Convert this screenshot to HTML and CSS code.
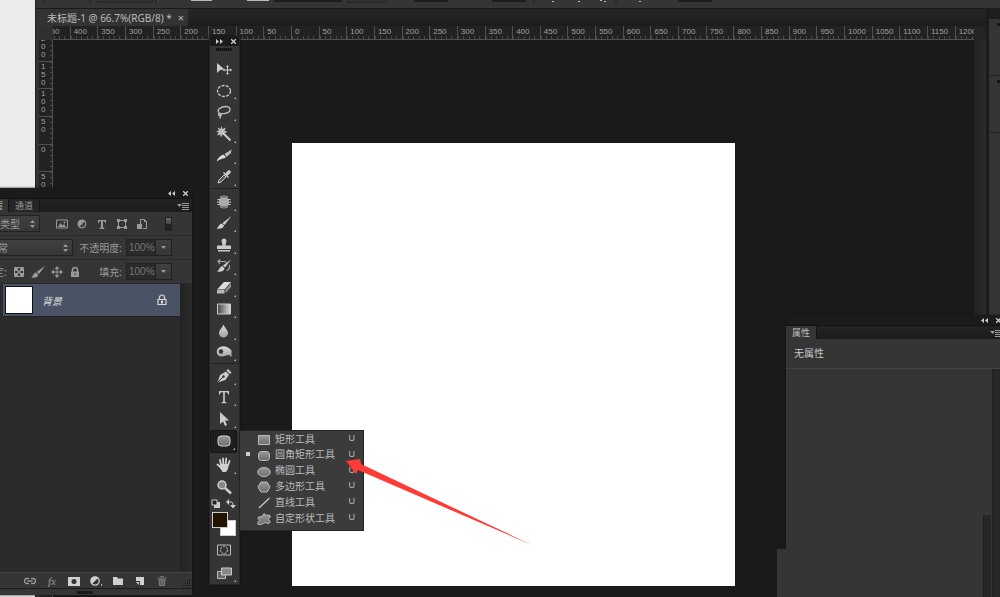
FILE: index.html
```html
<!DOCTYPE html>
<html lang="zh-CN">
<head>
    <meta charset="UTF-8">
    <meta name="viewport" content="width=device-width, initial-scale=1.0">
    <title>未标题-1</title>
    <link rel="stylesheet" href="styles.css">
</head>
<body>
    <svg class="defs" width="0" height="0" aria-hidden="true">
        <linearGradient id="metal" x1="0" y1="0" x2="0" y2="1">
            <stop offset="0" stop-color="#d8d8d8"/>
            <stop offset="1" stop-color="#a4a4a4"/>
        </linearGradient>
        <linearGradient id="shape" x1="0" y1="0" x2="0" y2="1">
            <stop offset="0" stop-color="#999"/>
            <stop offset="1" stop-color="#6c6c6c"/>
        </linearGradient>
        <linearGradient id="fade" x1="0" y1="0" x2="1" y2="0">
            <stop offset="0" stop-color="#444"/>
            <stop offset="1" stop-color="#ddd"/>
        </linearGradient>
    </svg>

    <div class="screen">
        <div class="desktop"></div>
        <div class="app">
            <!-- オプションバー -->
            <div class="options-bar">
                <svg width="965" height="6" viewBox="35 0 965 6">
                    <path d="M43 0v2M89 0v4M155 0v4M533 0v4M615 0v4" stroke="#222"/>
                    <path d="M95.500 0v2h56v-2M346.500 0v2h40v-2" fill="none" stroke="#202020"/>
                    <path d="M190 0h21v1h-21zM246 0h22v1h-22z" fill="#b8b8b8"/>
                    <path d="M273 0h68v2h-68zM413 0h34v2h-34zM491 0h34v2h-34zM677 0h34v2h-34z" fill="#1d1d1d"/>
                    <path d="M551 1h2v1h-2zM577 1h2v1h-2zM599 0h2v1h-2zM603 1h2v1h-2zM638 1h2v1h-2z" fill="#bbb"/>
                </svg>
            </div>
            <div class="workspace">
                <div class="document">
                    <div class="doc-tabs">
                        <div class="doc-tab">
                            <span>未标题-1 @ 66.7%(RGB/8) *</span>
                            <button class="close" aria-label="关闭">×</button>
                        </div>
                    </div>
                    <div class="ruler-row">
                        <div class="ruler-corner"></div>
                        <div class="ruler-h">
                            <span>450</span><span>400</span><span>350</span><span>300</span><span>250</span>
                            <span>200</span><span>150</span><span>100</span><span>50</span><span>0</span>
                            <span>50</span><span>100</span><span>150</span><span>200</span><span>250</span>
                            <span>300</span><span>350</span><span>400</span><span>450</span><span>500</span>
                            <span>550</span><span>600</span><span>650</span><span>700</span><span>750</span>
                            <span>800</span><span>850</span><span>900</span><span>950</span><span>1000</span>
                            <span>1050</span><span>1100</span><span>1150</span><span>1200</span>
                        </div>
                        <div class="scroll-top"></div>
                    </div>
                    <div class="view">
                        <div class="ruler-v">
                            <span>200</span><span>150</span><span>100</span><span>50</span><span>0</span><span>50</span>
                        </div>
                        <div class="canvas">
                            <div class="artboard"></div>
                        </div>
                        <div class="scrollbar"></div>
                    </div>
                </div>
                <div class="dock">
                    <div class="dock-head"></div>
                    <div class="dock-group"></div>
                    <div class="dock-group"></div>
                    <div class="dock-rest"></div>
                </div>
            </div>
        </div>

        <!-- レイヤーパネル -->
        <section class="panel layers">
            <header class="panel-head">
                <button aria-label="折叠"><svg width="7" height="5" viewBox="0 0 7 5"><path d="M3 0v5L0 2.500zM7 0v5L4 2.500z"/></svg></button>
                <button aria-label="关闭面板"><svg width="5" height="5" viewBox="0 0 5 5"><path d="M0 0l5 5M5 0L0 5" stroke="#ccc" stroke-width="1.300"/></svg></button>
            </header>
            <div class="panel-tabs">
                <button class="tab active">图层</button>
                <button class="tab">通道</button>
                <button class="menu-btn" aria-label="面板菜单"><svg width="12" height="8" viewBox="0 0 12 8"><path d="M0 2h5L2.500 5z"/><path d="M5 1.500h7M5 3.500h7M5 5.500h7M5 7.500h7" stroke="#999"/></svg></button>
            </div>
            <div class="row filter-row">
                <span class="select-box kind">
                    <select aria-label="类型"><option>类型</option></select>
                    <svg width="5" height="8" viewBox="0 0 5 8"><path d="M0 3L2.500 0 5 3zM0 5h5L2.500 8z"/></svg>
                </span>
                <div class="filters">
                    <button aria-label="像素图层"><svg viewBox="0 0 12 12"><path d="M.5 2h11v8H.5z" fill="none" stroke="#999"/><path d="M2 9l2.500-4 2 2.500L8 6l2 3z"/><circle cx="8.500" cy="4.500" r="1"/></svg></button>
                    <button aria-label="调整图层"><svg viewBox="0 0 12 12"><circle cx="6" cy="6" r="4" fill="#444" stroke="#999"/><path d="M3 9a4.200 4.200 0 0 1 6-6z"/></svg></button>
                    <button aria-label="文字图层"><svg viewBox="0 0 12 12"><path d="M2 2h8v3H9L8.500 3.300H7v6l1.300.7v1H3.700v-1L5 9.300v-6H3.500L3 5H2z"/></svg></button>
                    <button aria-label="形状图层"><svg viewBox="0 0 12 12"><path d="M2.500 2.500h7v7h-7z" fill="none" stroke="#999"/><path d="M1 1h3v3H1zM8 1h3v3H8zM1 8h3v3H1zM8 8h3v3H8z"/></svg></button>
                    <button aria-label="智能对象"><svg viewBox="0 0 12 12"><path d="M4.500 6V1.500h4l2 2v7H7" fill="none" stroke="#999"/><path d="M1 6h5v5H1zM8 1l3 3H8z"/></svg></button>
                </div>
                <button class="toggle" aria-label="打开或关闭图层过滤"></button>
            </div>
            <div class="row">
                <span class="select-box blend">
                    <select aria-label="混合模式"><option>正常</option></select>
                    <svg width="5" height="8" viewBox="0 0 5 8"><path d="M0 3L2.500 0 5 3zM0 5h5L2.500 8z"/></svg>
                </span>
                <label class="amount">不透明度: <input type="text" value="100%"></label>
                <button class="drop" aria-label="不透明度滑块"><svg width="5" height="3" viewBox="0 0 5 3"><path d="M0 0h5L2.500 3z"/></svg></button>
            </div>
            <div class="row">
                <span class="lock-label">锁定:</span>
                <div class="locks">
                    <button aria-label="锁定透明像素"><svg viewBox="0 0 12 12"><path d="M1.500 1.500h9v9h-9z" fill="#333" stroke="#999"/><path d="M2 2h3v3H2zM7 2h3v3H7zM4.500 4.500h3v3h-3zM2 7h3v3H2zM7 7h3v3H7z"/></svg></button>
                    <button class="brush" aria-label="锁定图像像素"><svg viewBox="0 0 14 12"><path d="M14 0L8 8 5.500 6zM5 6.500L7.500 9C6.500 12 3 12 0 11.500 2.500 10.500 2 7 5 6.500z"/></svg></button>
                    <button aria-label="锁定位置"><svg viewBox="0 0 12 12"><path d="M6 0l2.500 3h-5zM6 12L3.500 9h5zM0 6l3-2.500v5zM12 6L9 8.500v-5z"/><path d="M6 2v8M2 6h8" stroke="#999"/></svg></button>
                    <button aria-label="锁定全部"><svg viewBox="0 0 12 12"><path d="M3.500 6V4a2.500 2.500 0 0 1 5 0v2" fill="none" stroke="#999" stroke-width="1.500"/><path d="M2 5.500h8V11H2z"/><path d="M5.500 7h1v2h-1z" fill="#333"/></svg></button>
                </div>
                <label class="amount">填充: <input type="text" value="100%"></label>
                <button class="drop" aria-label="填充滑块"><svg width="5" height="3" viewBox="0 0 5 3"><path d="M0 0h5L2.500 3z"/></svg></button>
            </div>
            <div class="layer-area">
                <div class="layer-list">
                    <div class="layer">
                        <span class="thumb"></span>
                        <em class="layer-name">背景</em>
                        <svg width="10" height="12" viewBox="0 0 10 12"><path d="M2.500 5V3.500a2.500 2.500 0 0 1 5 0V5M1 5.500h8v5H1z" fill="none" stroke="#d5d5d5" stroke-width="1.200"/><path d="M4 6.500h2v3H4z" fill="#ddd"/></svg>
                    </div>
                </div>
                <div class="layer-scroll"></div>
            </div>
            <footer class="layer-foot">
                <button aria-label="链接图层"><svg viewBox="0 0 12 12"><path d="M5 8.500H3a2.500 2.500 0 0 1 0-5h2M7 3.500h2a2.500 2.500 0 0 1 0 5H7M3.500 6h5" fill="none" stroke="#999" stroke-width="1.300"/></svg></button>
                <button class="fx" aria-label="图层样式">fx</button>
                <button aria-label="添加蒙版"><svg viewBox="0 0 12 12"><path d="M0 2h12v9H0z" fill="#d0d0d0"/><circle cx="6" cy="6.500" r="2.500" fill="#333"/></svg></button>
                <button aria-label="调整图层"><svg viewBox="0 0 12 12"><circle cx="5" cy="6" r="4.200" fill="#333" stroke="#d0d0d0" stroke-width="1.200"/><path d="M2 9a4.200 4.200 0 0 1 6-6z" fill="#d0d0d0"/><path d="M11 9h1v2h-1z" fill="#aaa"/></svg></button>
                <button aria-label="新建组"><svg viewBox="0 0 12 12"><path d="M1 2h4l1 1.500h5V10H1z" fill="#d0d0d0"/></svg></button>
                <button aria-label="新建图层"><svg viewBox="0 0 12 12"><path d="M2 2h8v8H6V6H2z" fill="#d0d0d0"/><path d="M2 7h3v3z" fill="#d0d0d0"/></svg></button>
                <button aria-label="删除图层"><svg viewBox="0 0 12 12"><path d="M1.500 3h9M4.500 2.500v-1h3v1" stroke="#777" fill="none"/><path d="M2.500 4h7L9 11H3z" fill="#777"/><path d="M4.500 5v5M6 5v5M7.500 5v5" stroke="#444" stroke-width=".6"/></svg></button>
                <svg class="resize" viewBox="0 0 8 8"><path d="M6 0h1v1H6zM4 2h1v1H4zM6 2h1v1H6zM2 4h1v1H2zM4 4h1v1H4zM6 4h1v1H6zM0 6h1v1H0zM2 6h1v1H2zM4 6h1v1H4zM6 6h1v1H6z" fill="#151515"/></svg>
            </footer>
            <div class="grip-row"><span class="grip"></span></div>
        </section>

        <!-- ツールパネル -->
        <section class="toolbox">
            <header class="panel-head">
                <button aria-label="展开"><svg width="7" height="5" viewBox="0 0 7 5"><path d="M0 0v5l3-2.500zM4 0v5l3-2.500z"/></svg></button>
                <button aria-label="关闭工具"><svg width="5" height="5" viewBox="0 0 5 5"><path d="M0 0l5 5M5 0L0 5" stroke="#ccc" stroke-width="1.300"/></svg></button>
            </header>
            <div class="tool-grip"><span class="grip"></span></div>
            <div class="tools select-tools">
                <button aria-label="移动工具"><svg viewBox="0 0 16 16"><path d="M1 2v10l2.500-2.500L8 8z" fill="#ccc"/><path d="M11.500 5v8M7.500 9h8" stroke="#ccc"/><path d="M11.500 4l1.500 2h-3zM11.500 14l1.500-2h-3zM6.500 9l2-1.500v3zM16 9l-2 1.500v-3z" fill="#ccc"/></svg></button>
                <button class="more" aria-label="椭圆选框工具"><svg viewBox="0 0 16 16"><ellipse cx="8" cy="8" rx="6.500" ry="5.500" fill="none" stroke="#ccc" stroke-width="1.300" stroke-dasharray="3 1.200"/></svg></button>
                <button class="more" aria-label="套索工具"><svg viewBox="0 0 16 16"><path d="M4 10C-1 6 5 2.500 10 2.500c6 0 5 6-1 7-3 .5-5-.5-6 .5s0 2 1.500 1.500S5 10 3.500 10M4.500 12l-.5 2.500" fill="none" stroke="#bbb" stroke-width="1.400"/></svg></button>
                <button class="more" aria-label="魔棒工具"><svg viewBox="0 0 16 16"><path d="M5.500 0l1 3L10 1.500 8.500 4.500l3 1.500-3 1 1 3-3-1.500-1.500 3-1-3-3 1 1.500-3L0 5.500l3-1-1.500-3L4.500 3z" fill="#bbb"/><path d="M7 7l7.500 7.500" stroke="#ccc" stroke-width="2"/></svg></button>
                <button class="more" aria-label="切片工具"><svg viewBox="0 0 16 16"><path d="M.5 13.500c1-3 4-6 7-7L10 9.500c-3 1-6 1.500-9.500 4z" fill="#ddd"/><path d="M8.500 6L15.500 1.500 15 5l-4.500 4z" fill="#bbb"/></svg></button>
                <button class="more" aria-label="吸管工具"><svg viewBox="0 0 16 16"><path d="M2 14l1-3 5-5 2 2-5 5z" fill="#555" stroke="#ccc"/><path d="M7 4l5 5 1-1-1.500-1.500 3-2.500c1-2-1-3.500-2.500-2.500L9.500 4.500 8 3z" fill="#ccc"/></svg></button>
            </div>
            <div class="tools paint-tools">
                <button class="more" aria-label="修补工具"><svg viewBox="0 0 16 16"><path d="M5 2v12M7 1.500v13M9 1.500v13M11 2v12M1.500 5.500h13M1 8h14M1.500 10.500h13" stroke="#ccc"/><rect x="3" y="4" width="10" height="8" rx="3" fill="#aaa"/></svg></button>
                <button class="more" aria-label="画笔工具"><svg viewBox="0 0 16 16"><path d="M15.500 1L8.500 10 6.500 8zM6 8.500L8 10.500C7.500 14 3 14 .5 13.500c2-1 2.500-4.500 5.500-5z" fill="#d0d0d0"/></svg></button>
                <button class="more" aria-label="仿制图章工具"><svg viewBox="0 0 16 16"><path d="M8 1.500a2.500 2.500 0 0 1 2 4L9.500 8.500H14a1 1 0 0 1 1 1V12H1V9.500a1 1 0 0 1 1-1h4.500L6 5.500a2.500 2.500 0 0 1 2-4zM2 13h12v1.500H2z" fill="#ccc"/></svg></button>
                <button class="more" aria-label="历史记录画笔工具"><svg viewBox="0 0 16 16"><path d="M15 1.500L9 9.500 7 7.500zM6.500 8l2 2.500C8 14 4 14 1 13.500c2-1 2.500-5 5.500-5.500z" fill="#ccc"/><path d="M2 3.500h6c1 0 2 .5 2.500 1M4 1.500L2 3.500l2 2.500M13 7c1.500 2 0 5-2.500 5.500" fill="none" stroke="#aaa" stroke-width="1.200"/></svg></button>
                <button class="more" aria-label="橡皮擦工具"><svg viewBox="0 0 16 16"><path d="M8 2h7L9 9H1.500z" fill="#ddd"/><path d="M1 9.500h7.500V13.500H1z" fill="#b8b8b8"/><path d="M9.500 9.500L15 3v4l-5.500 6.500z" fill="#8c8c8c"/></svg></button>
                <button class="more" aria-label="渐变工具"><svg viewBox="0 0 16 16"><path d="M1.500 3h13v10h-13z" fill="url(#fade)" stroke="#ccc"/></svg></button>
                <button class="more" aria-label="模糊工具"><svg viewBox="0 0 16 16"><path d="M7.500 1.500C9 5 12 7 12 10a4.500 4.500 0 0 1-9 0c0-3 3-5 4.500-8.500z" fill="url(#metal)"/></svg></button>
                <button class="more" aria-label="加深工具"><svg viewBox="0 0 16 16"><path d="M4 3c4-2 9 0 11.500 3.500V13c-1 0-1-1.500-2.500-2-3 0-5 2-8 1.500C-.5 12-.5 5 4 3z" fill="url(#metal)"/><circle cx="5" cy="7.500" r="2.200" fill="#333"/></svg></button>
            </div>
            <div class="tools vector-tools">
                <button class="more" aria-label="钢笔工具"><svg viewBox="0 0 16 16"><path d="M1.500 14.500L4 7l6-3.500 3 3L9.500 12z" fill="#ccc"/><path d="M10.500 2.500L12 1l3.500 3.500L14 6z" fill="#ccc"/><path d="M2 14l5-5" stroke="#333"/><circle cx="7.500" cy="8.500" r="1.200" fill="#333"/></svg></button>
                <button class="more" aria-label="横排文字工具"><svg viewBox="0 0 16 16"><path d="M3 2h10v3.500h-1c0-1.500-.5-2.200-2-2.200H8.800v9c0 .7.500 1 1.700 1v1h-5v-1c1.200 0 1.700-.3 1.700-1v-9H6c-1.500 0-2 .7-2 2.200H3z" fill="#ccc"/></svg></button>
                <button class="more" aria-label="路径选择工具"><svg viewBox="0 0 16 16"><path d="M4 1v12l3-2.500L9 15l2-1-2-4.500h4z" fill="#ccc"/></svg></button>
                <button class="more current" aria-label="圆角矩形工具"><svg viewBox="0 0 16 16"><rect x="2" y="3" width="12" height="10" rx="3" fill="url(#shape)" stroke="#ccc"/></svg></button>
            </div>
            <div class="tools nav-tools">
                <button class="more" aria-label="抓手工具"><svg viewBox="0 0 16 16"><path d="M5 8L4 3M7.300 7L7 1.500M9.700 7l.5-5.500M12 8.500L13.500 4M5.500 11L1.500 7.500" stroke="#d0d0d0" stroke-width="1.800" stroke-linecap="round"/><path d="M4.500 7h8l-.5 5-2 3H6.500L3.500 10z" fill="#d0d0d0"/></svg></button>
                <button aria-label="缩放工具"><svg viewBox="0 0 16 16"><circle cx="6" cy="6" r="4" fill="#888" stroke="#ccc" stroke-width="1.500"/><path d="M9 9l6 5.500" stroke="#ccc" stroke-width="2.500"/></svg></button>
            </div>
            <div class="swap">
                <button aria-label="默认颜色"><svg viewBox="0 0 10 10"><path d="M3 3h6v6H3z" fill="#ccc"/><path d="M1 1h5v5H1z" fill="#222" stroke="#ccc"/></svg></button>
                <button aria-label="切换颜色"><svg viewBox="0 0 10 10"><path d="M2 3h3.500Q7 3 7 6" fill="none" stroke="#ccc"/><path d="M0 3l3-3v6zM4 6h6L7 9.500z" fill="#ccc"/></svg></button>
            </div>
            <div class="swatches">
                <button class="swatch back" aria-label="背景色"></button>
                <button class="swatch fore" aria-label="前景色"></button>
            </div>
            <div class="tools mode-tools">
                <button aria-label="快速蒙版"><svg viewBox="0 0 16 16"><path d="M1.500 3h13v10h-13z" fill="#333" stroke="#bbb"/><circle cx="8" cy="8" r="3.500" fill="none" stroke="#ccc" stroke-dasharray="2 1"/></svg></button>
                <button class="more" aria-label="屏幕模式"><svg viewBox="0 0 16 16"><path d="M1.500 6.500h8v7h-8z" fill="#666" stroke="#bbb"/><path d="M5.500 3h10v7h-10z" fill="#888" stroke="#ccc"/></svg></button>
            </div>
        </section>

        <!-- 図形ツールのメニュー -->
        <ul class="shape-menu">
            <li><button><i></i><svg viewBox="0 0 14 12"><path d="M1.500 1.500h11v9h-11z" fill="url(#shape)" stroke="#bbb"/></svg><span>矩形工具</span><kbd>U</kbd></button></li>
            <li><button><i class="on"></i><svg viewBox="0 0 14 12"><rect x="1.500" y="1.500" width="11" height="9" rx="3" fill="url(#shape)" stroke="#bbb"/></svg><span>圆角矩形工具</span><kbd>U</kbd></button></li>
            <li><button><i></i><svg viewBox="0 0 14 12"><ellipse cx="7" cy="6" rx="6.300" ry="4.500" fill="url(#shape)" stroke="#bbb"/></svg><span>椭圆工具</span><kbd>U</kbd></button></li>
            <li><button><i></i><svg viewBox="0 0 14 12"><path d="M4 1h6l3 5-3 5H4L1 6z" fill="url(#shape)" stroke="#bbb"/></svg><span>多边形工具</span><kbd>U</kbd></button></li>
            <li><button><i></i><svg viewBox="0 0 14 12"><path d="M2 11L12.500 1" stroke="#ccc" stroke-width="1.200"/></svg><span>直线工具</span><kbd>U</kbd></button></li>
            <li><button><i></i><svg viewBox="0 0 14 12"><path d="M6.500 1Q8 0 8.500 2.500L12 2q2 .5 1 2.500l-2 1.500 2 2.500q0 2-2 2L8 9.500 4 11.500 1 11.300Q0 10 1.500 8.500L3 7.500 1 5.500Q1 3.500 3 3.800L5 4z" fill="url(#shape)" stroke="#bbb"/></svg><span>自定形状工具</span><kbd>U</kbd></button></li>
        </ul>

        <!-- 属性パネル -->
        <section class="panel props">
            <header class="panel-head">
                <button aria-label="折叠属性"><svg width="7" height="5" viewBox="0 0 7 5"><path d="M3 0v5L0 2.500zM7 0v5L4 2.500z"/></svg></button>
                <button aria-label="关闭属性"><svg width="5" height="5" viewBox="0 0 5 5"><path d="M0 0l5 5M5 0L0 5" stroke="#ccc" stroke-width="1.300"/></svg></button>
            </header>
            <div class="panel-tabs">
                <button class="tab active">属性</button>
                <button class="menu-btn" aria-label="属性菜单"><svg width="12" height="8" viewBox="0 0 12 8"><path d="M0 2h5L2.500 5z"/><path d="M5 1.500h7M5 3.500h7M5 5.500h7M5 7.500h7" stroke="#999"/></svg></button>
            </div>
            <p class="props-title">无属性</p>
            <div class="props-body">
                <div class="props-main"></div>
                <div class="props-scroll"></div>
            </div>
        </section>
        <div class="props-drawer"></div>
        <div class="props-track"></div>

        <svg class="arrow" width="188" height="88" viewBox="0 0 188 88">
            <path d="M1 3L15 1l1 5 172 81.500L13 12l-2 4z" fill="#ff3b36"/>
        </svg>
    </div>
</body>
</html>
```
FILE: styles.css
```css
* {
    box-sizing: border-box;
    margin: 0;
    padding: 0;
}

body {
    font-family: "Noto Sans", "Noto Sans CJK SC", sans-serif;
    font-size: 10px;
    color: #bbb;
    background-color: #1a1a1a;
}

button,
input,
select {
    font: inherit;
    color: inherit;
    background: none;
    border: none;
    border-radius: 0;
}

button {
    display: flex;
    align-items: center;
    justify-content: center;
    cursor: pointer;
}

svg {
    display: block;
    fill: #999;
}

.defs {
    position: absolute;
}

.screen {
    position: relative;
    display: flex;
    height: 100vh;
    overflow: hidden;
}

.desktop {
    flex: 0 0 35px;
    background-color: #ebebeb;
}

.app {
    flex: 1;
    min-width: 0;
    display: flex;
    flex-direction: column;
    background-color: #1a1a1a;
    border-left: 1px solid #222;
}

/* オプションバー */
.options-bar {
    flex: 0 0 9px;
    overflow: hidden;
    background-color: #353535;
    border-bottom: 1px solid #1a1a1a;
}

.workspace {
    flex: 1;
    min-height: 0;
    display: flex;
    border-left: 3px solid #323232;
}

/* ドキュメント */
.document {
    flex: 1;
    min-width: 0;
    display: flex;
    flex-direction: column;
}

.doc-tabs {
    flex: 0 0 17px;
    display: flex;
    background: linear-gradient(#262626, #1c1c1c);
}

.doc-tab {
    display: flex;
    align-items: center;
    gap: 6px;
    padding: 0 4px 0 8px;
    background-color: #333;
    white-space: nowrap;
}

.close {
    font-size: 11px;
    line-height: 11px;
}

.ruler-row {
    flex: 0 0 14px;
    display: flex;
    font: 8px/11px "Liberation Sans", sans-serif;
    color: #a0a0a0;
}

.ruler-corner {
    flex: 0 0 14px;
    background-color: #303030;
}

.ruler-h {
    flex: 1;
    display: grid;
    grid-auto-flow: column;
    grid-auto-columns: calc(83px / 3);
    overflow: hidden;
    background-color: #222;
    border-bottom: 1px solid #505050;
}

.ruler-h span {
    margin-left: -11px;
    margin-right: 11px;
    padding-left: 3px;
    border-left: 1px solid #505050;
    background: repeating-linear-gradient(90deg, #484848 0 1px, transparent 1px 20%) bottom / 100% 3px no-repeat;
}

.scroll-top {
    flex: 0 0 12px;
    background-color: #242424;
}

.view {
    flex: 1;
    min-height: 0;
    display: flex;
}

.ruler-v {
    flex: 0 0 14px;
    display: grid;
    grid-auto-rows: calc(83px / 3);
    overflow: hidden;
    background-color: #222;
    border-right: 1px solid #505050;
    font: 8px/8px "Liberation Sans", sans-serif;
    color: #a0a0a0;
}

.ruler-v span {
    margin-top: -7px;
    margin-bottom: 7px;
    padding: 1px 8px 0 2px;
    word-break: break-all;
    border-top: 1px solid #505050;
    background: repeating-linear-gradient(#484848 0 1px, transparent 1px 20%) right / 3px 100% no-repeat;
}

.canvas {
    flex: 1;
    padding: 103px 0 10px 239px;
}

.artboard {
    width: 443px;
    aspect-ratio: 1;
    background-color: #fff;
}

.scrollbar {
    flex: 0 0 12px;
    background: linear-gradient(90deg, #222, #2b2b2b);
}

/* 右側のドック */
.dock {
    flex: 0 0 14px;
    display: flex;
    flex-direction: column;
    border-left: 3px solid #1c1c1c;
    background-color: #353535;
}

.dock-head {
    flex: 0 0 10px;
    background-color: #1e1e1e;
}

.dock-group {
    flex: 0 0 57px;
    padding: 4px 0 0 8px;
    border-bottom: 1px solid #202020;
}

.dock-group::before {
    content: "";
    display: block;
    height: 3px;
    background-color: #151515;
}

.dock-rest {
    flex: 1;
}

/* パネル共通 */
.panel,
.toolbox {
    position: absolute;
    display: flex;
    flex-direction: column;
    background-color: #353535;
    box-shadow: 0 0 2px #111;
}

.panel-head {
    flex: 0 0 10px;
    display: flex;
    align-items: center;
    justify-content: flex-end;
    gap: 8px;
    padding-right: 4px;
    background-color: #1b1b1b;
    border-radius: 2px 2px 0 0;
}

.panel-head svg {
    fill: #ccc;
}

.panel-tabs {
    flex: 0 0 14px;
    display: flex;
    background: linear-gradient(#232323, #1c1c1c);
    border-top: 1px solid #111;
}

.tab {
    padding: 0 6px;
    font-size: 9px;
    line-height: 13px;
    color: #999;
    background-color: #262626;
    border-right: 1px solid #141414;
}

.tab.active {
    color: #bbb;
    background-color: #353535;
}

.menu-btn {
    margin-left: auto;
    padding-right: 3px;
}

.grip {
    width: 16px;
    height: 3px;
    background: repeating-linear-gradient(90deg, #111 0 1px, #222 1px 2px);
}

/* レイヤーパネル */
.layers {
    left: -40px;
    top: 188px;
    bottom: 2px;
    width: 232px;
}

.layers .tab.active {
    padding: 0 5px 0 25px;
}

.row {
    flex: 0 0 24px;
    display: flex;
    align-items: center;
    padding-right: 20px;
    color: #999;
    border-bottom: 1px solid #292929;
}

.select-box {
    display: flex;
    align-items: center;
    height: 17px;
    background: linear-gradient(#404040, #363636);
    border: 1px solid #222;
}

.select-box select {
    flex: 1;
    appearance: none;
    outline: none;
}

.select-box svg {
    margin: 0 4px 0 -10px;
    pointer-events: none;
}

.kind {
    width: 80px;
    padding-left: 39px;
}

.blend {
    width: 113px;
    padding-left: 27px;
}

.filters,
.locks {
    display: flex;
}

.filters {
    gap: 8px;
    padding-left: 16px;
}

.filters svg,
.locks svg {
    width: 12px;
    height: 12px;
}

.locks {
    gap: 6px;
}

.locks .brush svg {
    width: 14px;
}

.lock-label {
    width: 53px;
    padding-left: 24px;
}

.toggle {
    width: 7px;
    height: 14px;
    margin-left: auto;
    background: linear-gradient(#666, #444 50%, #222 50%);
    border: 1px solid #222;
}

.amount {
    display: flex;
    align-items: center;
    gap: 4px;
    margin-left: auto;
}

.amount input {
    width: 30px;
    height: 17px;
    padding-left: 2px;
    font: 10px "Liberation Sans", sans-serif;
    color: #777;
    background-color: #2a2a2a;
    border: 1px solid #222;
}

.drop {
    width: 16px;
    height: 17px;
    background: linear-gradient(#404040, #363636);
    border: 1px solid #222;
    border-left: none;
}

.layer-area {
    flex: 1;
    display: flex;
    background-color: #2b2b2b;
}

.layer-list {
    flex: 1;
    padding-left: 43px;
}

.layer {
    display: flex;
    align-items: center;
    height: 33px;
    padding: 0 13px 0 2px;
    background-color: #4a5366;
    border-bottom: 1px solid #222;
}

.thumb {
    width: 28px;
    height: 28px;
    background-color: #fff;
    border: 1px solid #111;
}

.layer-name {
    flex: 1;
    padding-left: 9px;
    color: #ddd;
}

.layer-scroll {
    flex: 0 0 12px;
    background: linear-gradient(90deg, #222, #2b2b2b);
}

.layer-foot {
    flex: 0 0 16px;
    display: flex;
    align-items: center;
    gap: 10px;
    padding-left: 64px;
    border-top: 1px solid #444;
}

.layer-foot button {
    flex: 0 0 12px;
}

.layer-foot svg {
    width: 12px;
    height: 12px;
}

.layer-foot .fx {
    font: italic 11px/12px "Liberation Serif", serif;
    color: #999;
}

.layer-foot .resize {
    width: 8px;
    height: 8px;
    margin: 4px 1px 0 auto;
}

.grip-row {
    flex: 0 0 7px;
    display: flex;
    align-items: center;
    padding-left: 117px;
    border-top: 1px solid #1c1c1c;
}

/* ツールパネル */
.toolbox {
    left: 209px;
    top: 36px;
    width: 31px;
    border: 1px solid #242424;
    border-top: none;
}

.toolbox .panel-head {
    padding-right: 3px;
}

.tool-grip {
    height: 11px;
    padding: 2px 0 0 6px;
    display: flex;
}

.tools {
    display: flex;
    flex-direction: column;
}

.tools button {
    position: relative;
    flex: 1;
    width: 27px;
}

.tools svg {
    width: 16px;
    height: 16px;
}

.more::after {
    content: "";
    position: absolute;
    right: 1px;
    bottom: 2px;
    border: 1px solid #bbb;
    border-top-color: transparent;
    border-left-color: transparent;
}

.select-tools {
    height: 132px;
    padding-top: 1px;
    border-bottom: 1px solid #222;
}

.paint-tools {
    height: 175px;
    padding-top: 2px;
    border-bottom: 1px solid #222;
}

.vector-tools {
    height: 89px;
    padding-top: 1px;
}

.tools .current {
    background-color: #1e1e1e;
    border: 1px solid #151515;
    border-radius: 2px;
}

.nav-tools {
    height: 45px;
    padding-top: 1px;
}

.swap {
    display: flex;
    justify-content: space-between;
    padding: 1px 3px 3px 1px;
}

.swap svg {
    width: 10px;
    height: 10px;
}

.swatches {
    display: grid;
    grid-template-columns: repeat(3, 8px);
    grid-template-rows: repeat(3, 8px);
    padding-left: 2px;
}

.swatch {
    border: 1px solid #ccc;
}

.fore {
    grid-area: 1 / 1 / 3 / 3;
    background-color: #231300;
}

.back {
    grid-area: 2 / 2 / 4 / 4;
    background-color: #fff;
}

.mode-tools {
    height: 48px;
    padding-top: 2px;
}

/* 図形ツールのメニュー */
.shape-menu {
    position: absolute;
    left: 239px;
    top: 430px;
    width: 125px;
    display: grid;
    grid-auto-rows: calc(95px / 6);
    padding-bottom: 4px;
    list-style: none;
    background-color: #3b3b3b;
    border: 1px solid #222;
}

.shape-menu button {
    width: 100%;
    height: 14px;
    padding: 0 8px 0 6px;
    color: #bbb;
}

.shape-menu i {
    width: 4px;
    height: 4px;
    margin-right: 7px;
}

.shape-menu .on {
    background-color: #ccc;
}

.shape-menu svg {
    width: 14px;
    height: 12px;
    margin-top: 4px;
}

.shape-menu span {
    flex: 1;
    padding-left: 4px;
    text-align: left;
}

.shape-menu kbd {
    font: 9px "Liberation Sans", sans-serif;
}

/* 属性パネル */
.props {
    left: 786px;
    right: -2px;
    top: 315px;
    bottom: 0;
}

.props .panel-head {
    padding-right: 1px;
}

.props .menu-btn {
    padding-right: 0;
}

.props-title {
    padding: 7px 8px;
    line-height: 15px;
    color: #c8c8c8;
    border-bottom: 1px solid #444;
}

.props-body {
    flex: 1;
    display: flex;
}

.props-main {
    flex: 1;
}

.props-scroll {
    flex: 0 0 10px;
    background-color: #282828;
    border-left: 2px solid #222;
}

.props-drawer {
    position: absolute;
    left: 777px;
    right: 17px;
    top: 549px;
    bottom: 0;
    background-color: #353535;
}

.props-track {
    position: absolute;
    right: 9px;
    top: 515px;
    bottom: 0;
    width: 8px;
    background-color: #272727;
    border-left: 1px solid #1e1e1e;
}

.arrow {
    position: absolute;
    left: 345px;
    top: 458px;
}
```
